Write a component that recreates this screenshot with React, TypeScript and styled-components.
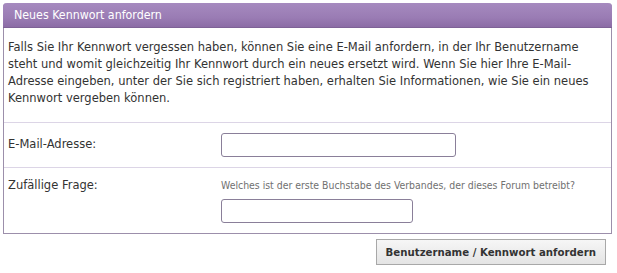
import styled, { createGlobalStyle } from 'styled-components'

const GlobalStyle = createGlobalStyle`
    body {
        margin: 0;
        background: #ffffff;
        font-family: "DejaVu Sans", Verdana, sans-serif;
        color: #333333;
    }
`

function App() {
    return (
        <Page>
            <GlobalStyle />
            <Panel>
                <Header>Neues Kennwort anfordern</Header>
                <Intro>
                    Falls Sie Ihr Kennwort vergessen haben, können Sie eine E-Mail anfordern, in der Ihr Benutzername
                    steht und womit gleichzeitig Ihr Kennwort durch ein neues ersetzt wird. Wenn Sie hier Ihre E-Mail-Adresse
                    eingeben, unter der Sie sich registriert haben, erhalten Sie Informationen, wie Sie ein neues
                    Kennwort vergeben können.
                </Intro>
                <Row>
                    <Label $centered>E-Mail-Adresse:</Label>
                    <Field>
                        <Input type="text" $width={235} />
                    </Field>
                </Row>
                <Row $last>
                    <Label>Zufällige Frage:</Label>
                    <Field>
                        <Hint>Welches ist der erste Buchstabe des Verbandes, der dieses Forum betreibt?</Hint>
                        <Input type="text" $width={192} />
                    </Field>
                </Row>
            </Panel>
            <Actions>
                <SubmitButton>Benutzername / Kennwort anfordern</SubmitButton>
            </Actions>
        </Page>
    )
}

export default App

const Page = styled.div`
    padding: 3px 5px 0 3px;
    width: 609px;
`

const Panel = styled.div`
    border: 1px solid #9c8fab;
    border-top: none;
    border-radius: 4px 4px 0 0;
    background: #ffffff;
`

const Header = styled.div`
    height: 24px;
    margin: 0 -1px;
    padding: 0 11px;
    display: flex;
    align-items: center;
    border-radius: 4px 4px 0 0;
    background: linear-gradient(#a68abf, #9a7cb4 60%, #8c6ca6);
    border-bottom: 1px solid #7e6296;
    color: #ffffff;
    font-family: "DejaVu Sans Condensed", "DejaVu Sans", sans-serif;
    font-size: 12.3px;
`

const Intro = styled.p`
    margin: 0;
    padding: 11px 2px 15px 4px;
    font-size: 11.5px;
    line-height: 17px;
    border-bottom: 1px solid #dcd5e6;
`

const Row = styled.div<{ $last?: boolean }>`
    display: grid;
    grid-template-columns: 213px 1fr;
    padding: 10px 4px 10px 4px;
    border-bottom: ${p => (p.$last ? 'none' : '1px solid #dcd5e6')};
    align-items: ${p => (p.$last ? 'start' : 'center')};
`

const Label = styled.div<{ $centered?: boolean }>`
    font-size: 11.5px;
    line-height: 17px;
    margin-top: ${p => (p.$centered ? '-2px' : '-1px')};
`

const Field = styled.div`
    display: flex;
    flex-direction: column;
    gap: 7px;
`

const Hint = styled.div`
    font-family: "DejaVu Sans Condensed", "DejaVu Sans", sans-serif;
    font-size: 10.4px;
    color: #707070;
    line-height: 14px;
`

const Input = styled.input<{ $width: number }>`
    box-sizing: border-box;
    width: ${p => p.$width}px;
    height: 24px;
    margin: 0;
    border: 1px solid #8a7f99;
    border-radius: 3px;
    background: #ffffff;
`

const Actions = styled.div`
    display: flex;
    justify-content: flex-end;
    padding: 5px 6px 0 0;
`

const SubmitButton = styled.button`
    height: 26px;
    padding: 0 9px;
    border: 1px solid #a8a8a8;
    background: linear-gradient(#f6f6f6, #e4e4e4);
    color: #333333;
    font-family: "DejaVu Sans", sans-serif;
    font-size: 10.2px;
    font-weight: bold;
    cursor: pointer;
`
